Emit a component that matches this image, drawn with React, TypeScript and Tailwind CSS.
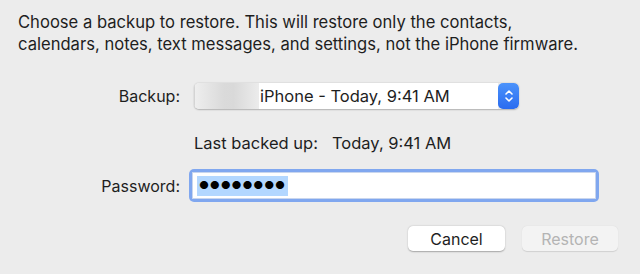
export default function App() {
  return (
    <div
      className="w-[640px] h-[274px] bg-[#ececec] text-[#1e1e1e] pt-[11px] px-[18px]"
      style={{ fontFamily: "Inter, 'Liberation Sans', sans-serif" }}
    >
      {/* Description */}
      <p className="text-[16.6px] leading-[22px]">
        Choose a backup to restore. This will restore only the contacts,
        <br />
        calendars, notes, text messages, and settings, not the iPhone firmware.
      </p>

      {/* Backup */}
      <div className="mt-[28px] flex items-center">
        <div className="w-[162px] text-right text-[16px]">Backup:</div>
        <div className="ml-[14px] w-[325px] h-[26px] flex rounded-[5px] overflow-hidden shadow-[0_0.5px_1.5px_rgba(0,0,0,0.25)]">
          <div className="w-[65px] h-full bg-[linear-gradient(90deg,#eeeeee_0%,#dadada_45%,#d9d9d9_60%,#ececec_100%)] border-l border-[#d4d4d4]" />
          <div className="flex-1 h-full bg-white flex items-center pl-[1px] text-[16.5px]">
            iPhone - Today, 9:41 AM
          </div>
          <div className="w-[21px] h-full bg-[linear-gradient(180deg,#4b93fb,#2a6cf0)] rounded-[5px] flex items-center justify-center">
            <svg width="10" height="16" viewBox="0 0 10 16" fill="none">
              <path d="M2 6 L5 3 L8 6" stroke="white" strokeWidth="1.6" strokeLinecap="round" strokeLinejoin="round" />
              <path d="M2 10 L5 13 L8 10" stroke="white" strokeWidth="1.6" strokeLinecap="round" strokeLinejoin="round" />
            </svg>
          </div>
        </div>
      </div>

      {/* Last backed up */}
      <div className="mt-[23px] h-[22px] flex items-center pl-[176px] text-[16.5px]">
        <span>Last backed up:</span>
        <span className="ml-[14px]">Today, 9:41 AM</span>
      </div>

      {/* Password */}
      <div className="mt-[15px] flex items-center">
        <div className="w-[162px] text-right text-[16px]">Password:</div>
        <div className="ml-[9px] w-[410px] h-[33px] rounded-[5px] bg-[#80a7ef] p-[3px]">
          <div className="w-full h-full bg-white border border-[#c9d6ee] flex items-center pl-[4px]">
            <span className="bg-[#b3d7ff] h-[20px] flex items-center px-[2px] text-[11px] tracking-[0.8px] text-black">
              ●●●●●●●●
            </span>
          </div>
        </div>
      </div>

      {/* Buttons */}
      <div className="mt-[24px] flex justify-end gap-[17px] pr-[4px]">
        <button className="w-[97px] h-[25px] rounded-[5px] bg-white text-[16px] text-[#1e1e1e] shadow-[0_0.5px_1.5px_rgba(0,0,0,0.3)]">
          Cancel
        </button>
        <button className="w-[96px] h-[25px] rounded-[5px] bg-[#f3f3f3] text-[16px] text-[#b4b4b4] shadow-[0_0.5px_1px_rgba(0,0,0,0.12)]">
          Restore
        </button>
      </div>
    </div>
  );
}
